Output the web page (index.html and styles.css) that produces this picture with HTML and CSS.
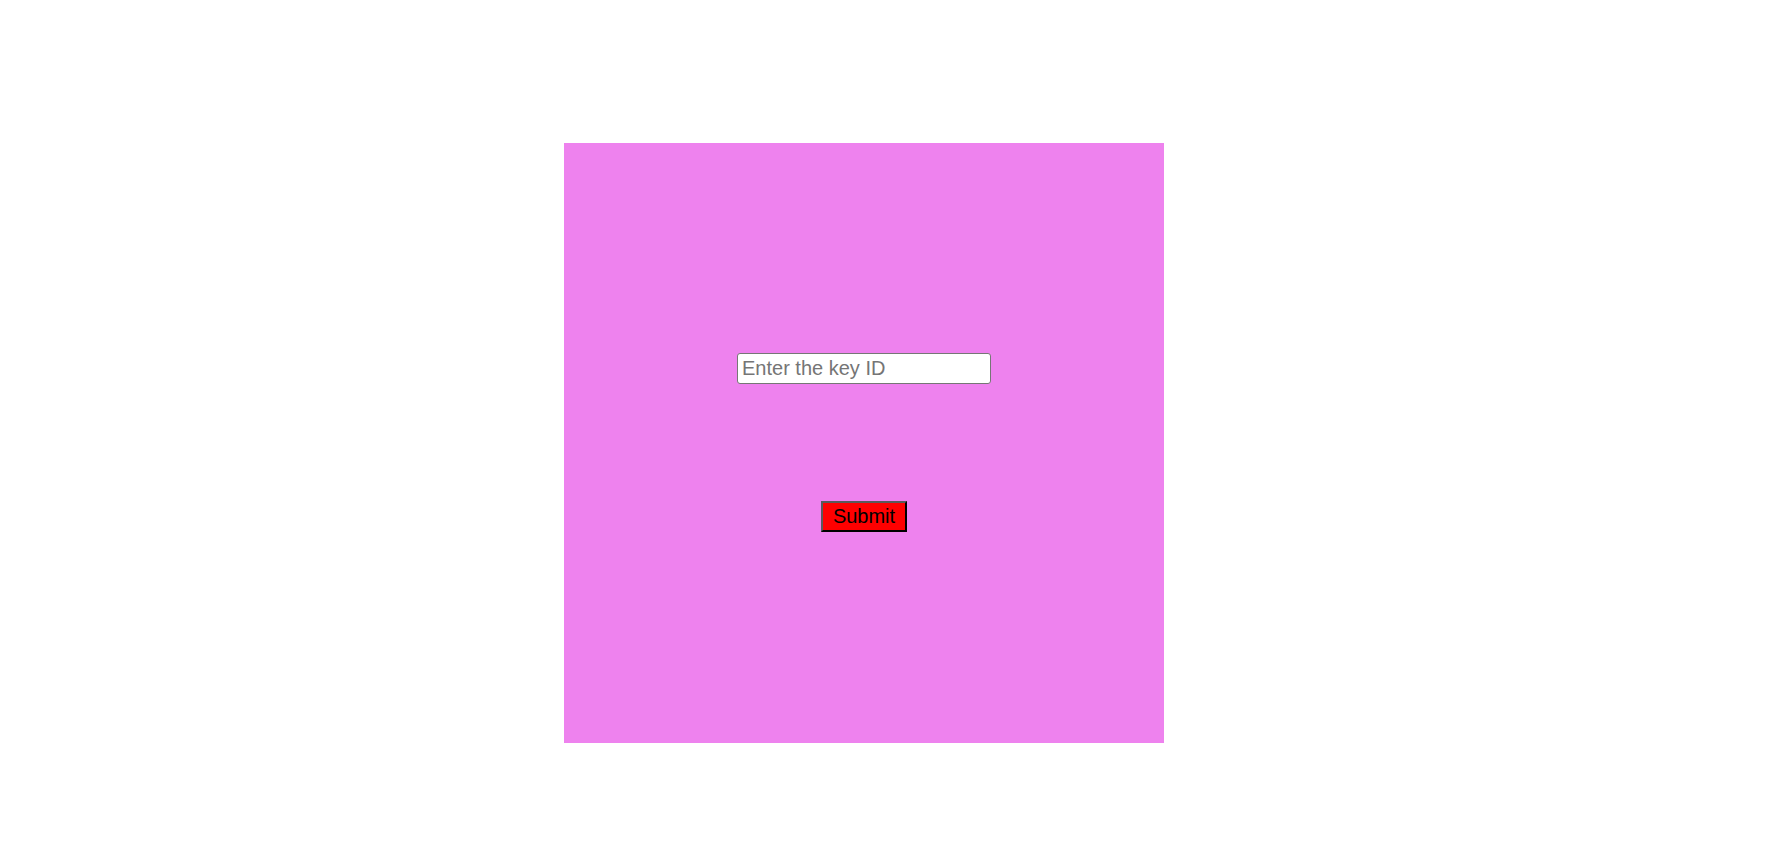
FILE: index.html
```html
<!DOCTYPE html>
<html>
<head>
<meta charset="utf-8">
<link rel="stylesheet" href="styles.css">
</head>
<body>
<div class="box">
  <input class="key-input" type="text" placeholder="Enter the key ID">
  <button class="submit-btn">Submit</button>
</div>
</body>
</html>
```
FILE: styles.css
```css
html, body {
  margin: 0;
  padding: 0;
  background: #ffffff;
}
body {
  font-family: "Liberation Sans", Arial, sans-serif;
}
.box {
  width: 600px;
  height: 600px;
  margin: 143px 0 0 564px;
  background: #ee82ee;
  box-sizing: border-box;
  padding-top: 210px;
  display: flex;
  flex-direction: column;
  align-items: center;
  gap: 117px;
}
.key-input {
  box-sizing: border-box;
  width: 254px;
  height: 31px;
  font-family: "Liberation Sans", Arial, sans-serif;
  font-size: 20px;
  padding: 0 4px;
  border: 1px solid #767676;
  border-radius: 3px;
  background: #ffffff;
  color: #000;
  outline: none;
}
.key-input::placeholder {
  color: #757575;
}
.submit-btn {
  box-sizing: border-box;
  width: 86px;
  height: 31px;
  font-family: "Liberation Sans", Arial, sans-serif;
  font-size: 20px;
  padding: 0;
  background: #ff0000;
  color: #000;
  border-style: solid;
  border-width: 2px;
  border-color: #5a5a5a #000 #000 #5a5a5a;
}
```
